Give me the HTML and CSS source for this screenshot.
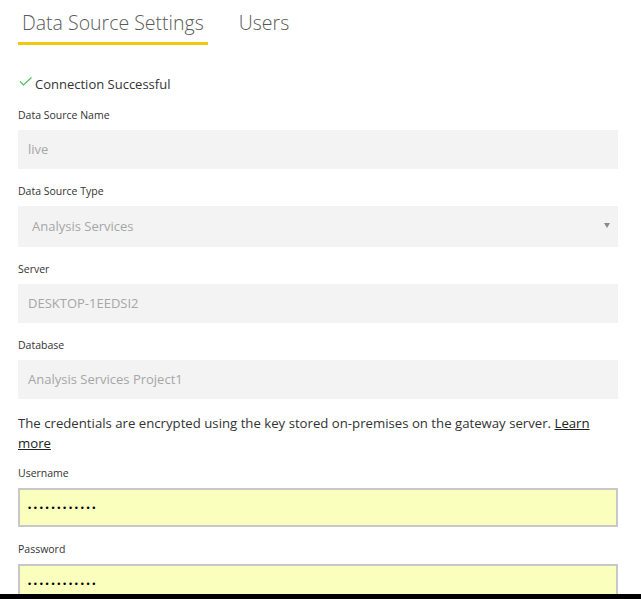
FILE: index.html
```html
<!DOCTYPE html>
<html lang="en">
<head>
<meta charset="utf-8">
<title>Data Source Settings</title>
<link rel="stylesheet" href="styles.css">
</head>
<body>
<div class="page">
  <nav class="tabs">
    <div class="tab active">Data Source Settings</div>
    <div class="tab">Users</div>
  </nav>
  <div class="content">
    <div class="status">
      <svg class="check" width="14" height="10" viewBox="0 0 14 10"><path d="M1 4.5 L4.5 8 L12.5 0.5" fill="none" stroke="#4cbb5a" stroke-width="1.1"/></svg>
      <span>Connection Successful</span>
    </div>
    <div class="group">
      <div class="label">Data Source Name</div>
      <div class="field">live</div>
    </div>
    <div class="group">
      <div class="label">Data Source Type</div>
      <div class="field select">Analysis Services<span class="arrow"></span></div>
    </div>
    <div class="group">
      <div class="label">Server</div>
      <div class="field">DESKTOP-1EEDSI2</div>
    </div>
    <div class="group">
      <div class="label">Database</div>
      <div class="field db">Analysis Services Project1</div>
    </div>
    <p class="note">The credentials are encrypted using the key stored on-premises on the gateway server. <a href="#">Learn more</a></p>
    <div class="group tight">
      <div class="label">Username</div>
      <input class="cred" type="password" value="abcdefghijkl" readonly>
    </div>
    <div class="group">
      <div class="label">Password</div>
      <input class="cred" type="password" value="abcdefghijkl" readonly>
    </div>
  </div>
</div>
<div class="bottom-bar"></div>
</body>
</html>
```

FILE: styles.css
```css
* { box-sizing: border-box; }
html, body { margin: 0; padding: 0; background: #fff; }
body {
  font-family: "Open Sans", "Noto Sans", "Liberation Sans", sans-serif;
  color: #333;
  height: 599px;
  overflow: hidden;
  position: relative;
}
.page { padding: 0 23px 0 18px; }
.tabs {
  display: flex;
  gap: 27px;
  padding-top: 9px;
}
.tab {
  font-size: 19.5px;
  font-weight: 300;
  color: #5a5a5a;
  padding: 0 4px 5px;
  line-height: 28px;
  border-bottom: 3px solid transparent;
}
.tab.active { border-bottom-color: #f2c811; }
.status {
  display: flex;
  align-items: center;
  margin-top: 29px;
  height: 20px;
  font-size: 13px;
  color: #333;
}
.check { margin: -4px 2px 0 1px; }
.group { margin-top: 13px; }
.group + .group { margin-top: 14px; }
.label {
  font-size: 10.5px;
  line-height: 16px;
  height: 16px;
  margin-bottom: 7px;
  color: #333;
}
.field {
  height: 39px;
  background: #f3f3f3;
  color: #a6a6a6;
  font-size: 13px;
  line-height: 39px;
  padding-left: 10px;
}
.field.select {
  height: 41px;
  line-height: 41px;
  padding-left: 14px;
  display: flex;
  justify-content: space-between;
  align-items: center;
  padding-right: 8px;
}
.field.db { padding-left: 10px; }
.arrow {
  width: 0; height: 0;
  border-left: 3px solid transparent;
  border-right: 3px solid transparent;
  border-top: 5px solid #8a8a8a;
  margin-top: -2px;
}
.note {
  margin: 14px 0 0;
  padding-right: 12px;
  font-size: 13.2px;
  line-height: 20px;
  color: #333;
}
.note a { color: #222; text-decoration: underline; }
.group.tight { margin-top: 12px; }
.cred {
  display: block;
  width: 100%;
  height: 39px;
  border: 2px solid #c8c8c8;
  background: #faffbd;
  padding: 0 8px;
  font-family: "Liberation Sans", sans-serif;
  font-size: 9px;
  letter-spacing: 2.7px;
  color: #000;
  outline: none;
}
.bottom-bar {
  position: absolute;
  left: 0; right: 0; bottom: 0;
  height: 5px;
  background: #000;
}
```
